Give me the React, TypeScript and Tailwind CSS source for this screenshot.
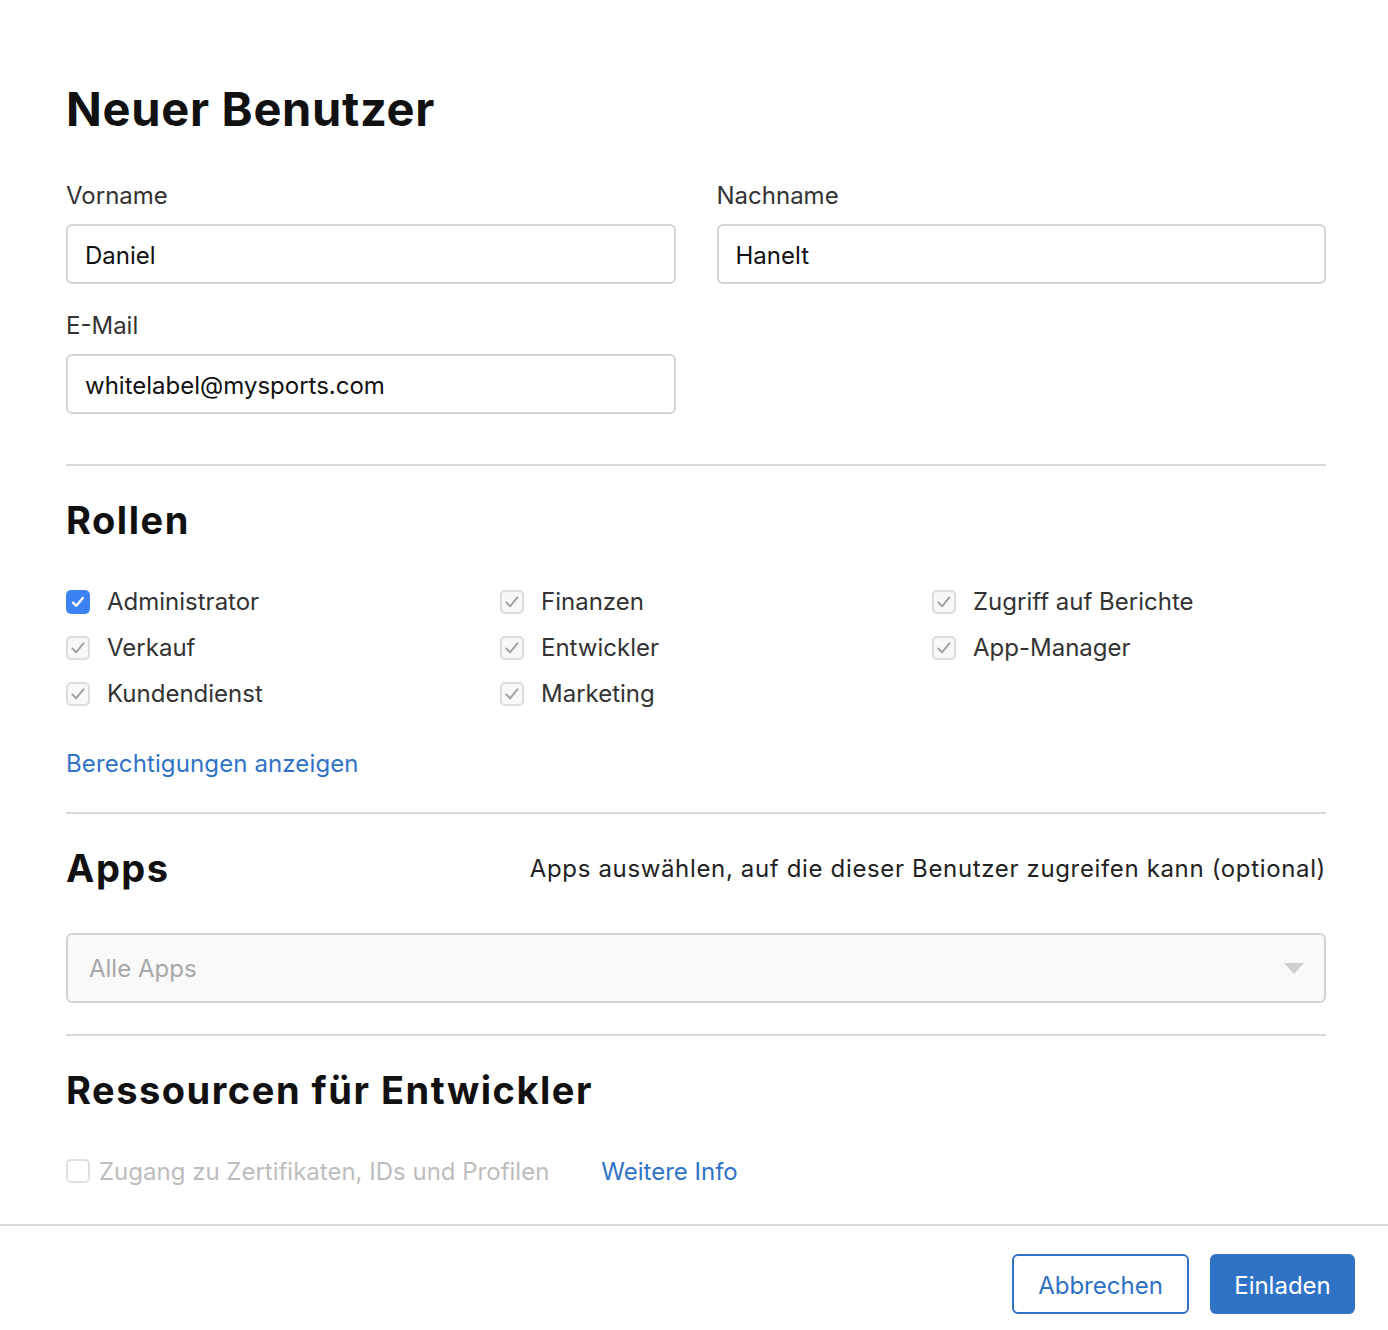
import React from "react";

const roles = [
  ["Administrator", "Finanzen", "Zugriff auf Berichte"],
  ["Verkauf", "Entwickler", "App-Manager"],
  ["Kundendienst", "Marketing", ""],
];

function Check({ active }: { active?: boolean }) {
  if (active) {
    return (
      <span className="flex h-[24px] w-[24px] shrink-0 items-center justify-center rounded-[5px] bg-[#3d82f2]">
        <svg width="16" height="16" viewBox="0 0 16 16" fill="none">
          <path d="M3 8.6 L6.4 11.8 L12.8 4" stroke="white" strokeWidth="2.3" strokeLinecap="round" strokeLinejoin="round" />
        </svg>
      </span>
    );
  }
  return (
    <span className="flex h-[24px] w-[24px] shrink-0 items-center justify-center rounded-[5px] border-2 border-[#dcdcdc] bg-[#f8f8f8]">
      <svg width="18" height="18" viewBox="0 0 16 16" fill="none">
        <path d="M3 8.4 L6.3 11.8 L12.8 3.8" stroke="#a3a3a3" strokeWidth="1.8" strokeLinecap="round" strokeLinejoin="round" />
      </svg>
    </span>
  );
}

function Field({ label, value }: { label: string; value: string }) {
  return (
    <div>
      <div className="pt-[1px] text-[24px] leading-[31px] text-[#333]">{label}</div>
      <div className="mt-[13px] flex h-[60px] items-center rounded-[6px] border-2 border-[#d4d4d4] px-[17px] pt-[3px] text-[24px] text-[#111]">
        {value}
      </div>
    </div>
  );
}

function Divider({ className }: { className: string }) {
  return <div className={"h-[2px] bg-[#d9d9d9] " + className} />;
}

export default function App() {
  return (
    <div className="min-h-screen bg-white font-['Inter','Liberation_Sans',sans-serif] text-[#111]">
      <div className="pl-[66px] pr-[62px]">
        <h1 className="pt-[81px] text-[47px] font-bold leading-[56px] tracking-[0.015em]">Neuer Benutzer</h1>

        <div className="mt-[42px] grid grid-cols-2 gap-x-[41px]">
          <Field label="Vorname" value="Daniel" />
          <Field label="Nachname" value="Hanelt" />
        </div>
        <div className="mt-[25px] grid grid-cols-2 gap-x-[41px]">
          <Field label="E-Mail" value="whitelabel@mysports.com" />
        </div>

        <Divider className="mt-[50px]" />

        <h2 className="mt-[30px] text-[38px] font-bold leading-[48px] tracking-[0.04em]">Rollen</h2>

        <div className="mt-[35px]">
          {roles.map((row, i) => (
            <div key={i} className="grid h-[46px] grid-cols-[434px_432px_1fr] items-center">
              {row.map((r, j) =>
                r ? (
                  <div key={j} className="flex items-center gap-[17px]">
                    <Check active={i === 0 && j === 0} />
                    <span className="text-[24px] text-[#333]">{r}</span>
                  </div>
                ) : (
                  <div key={j} />
                )
              )}
            </div>
          ))}
        </div>

        <div className="mt-[30px] pt-[1px] text-[24px] leading-[32px] tracking-[0.005em] text-[#2f73c9]">Berechtigungen anzeigen</div>

        <Divider className="mt-[32px]" />

        <div className="mt-[30px] flex h-[48px] items-center justify-between">
          <h2 className="text-[38px] font-bold leading-[48px] tracking-[0.04em]">Apps</h2>
          <span className="pt-[2px] text-[24px] tracking-[0.027em] text-[#222]">
            Apps auswählen, auf die dieser Benutzer zugreifen kann (optional)
          </span>
        </div>

        <div className="mt-[41px] flex h-[70px] items-center justify-between rounded-[6px] border-2 border-[#d2d2d2] bg-[#f9f9f9] pl-[21px] pr-[20px]">
          <span className="pt-[2px] text-[24px] text-[#a8a8a8]">Alle Apps</span>
          <svg width="20" height="11" viewBox="0 0 20 11">
            <path d="M0 0 H20 L10 11 Z" fill="#cfcfcf" />
          </svg>
        </div>

        <Divider className="mt-[31px]" />

        <h2 className="mt-[30px] text-[38px] font-bold leading-[48px] tracking-[0.04em]">Ressourcen für Entwickler</h2>

        <div className="mt-[41px] flex h-[32px] items-center">
          <span className="h-[24px] w-[24px] rounded-[5px] border-2 border-[#e0e0e0] bg-white" />
          <span className="ml-[9px] pt-[1px] text-[24px] text-[#bdbdbd]">Zugang zu Zertifikaten, IDs und Profilen</span>
          <span className="ml-[52px] pt-[1px] text-[24px] text-[#2f73c9]">Weitere Info</span>
        </div>
      </div>

      <div className="mt-[37px] h-[2px] bg-[#dadada]" />

      <div className="mt-[28px] flex justify-end gap-[21px] pb-[16px] pr-[33px]">
        <button className="h-[60px] w-[177px] rounded-[6px] border-2 border-[#3073c6] bg-white pt-[3px] text-[24px] text-[#2f71c4]">
          Abbrechen
        </button>
        <button className="h-[60px] w-[145px] rounded-[6px] bg-[#3073c6] pt-[3px] text-[24px] text-white">Einladen</button>
      </div>
    </div>
  );
}
